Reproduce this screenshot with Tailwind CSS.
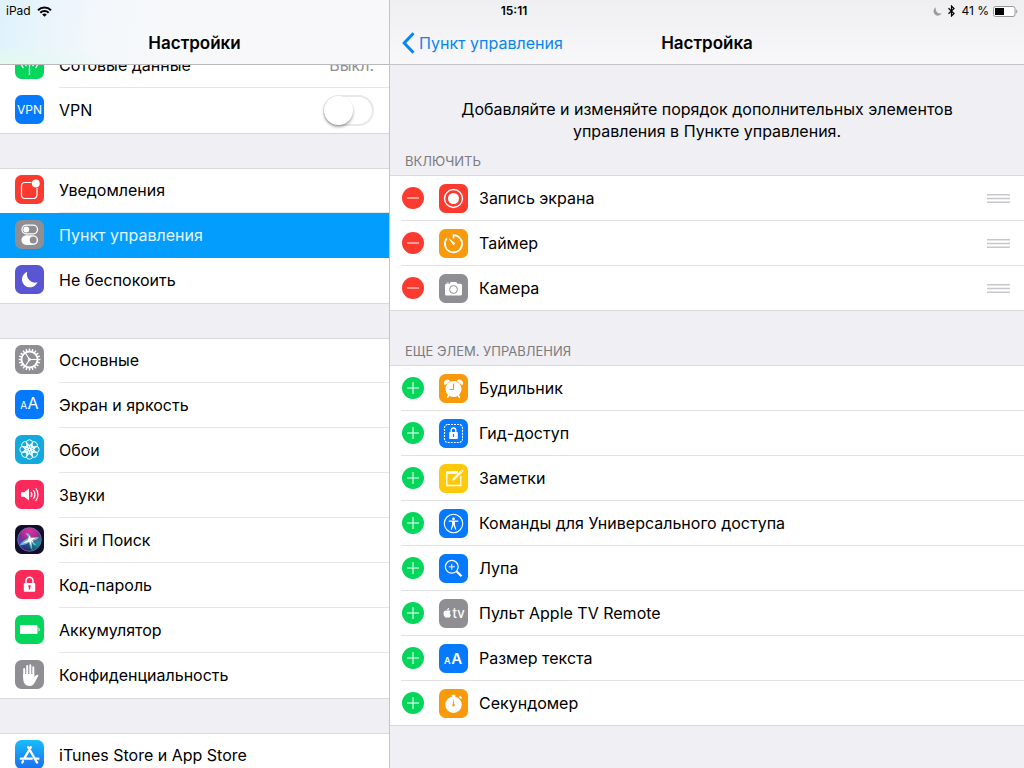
<!DOCTYPE html>
<html lang="ru">
<head>
<meta charset="utf-8">
<meta name="viewport" content="width=device-width, initial-scale=1">
<title>Настройки</title>
<script src="https://cdn.jsdelivr.net/npm/@tailwindcss/browser@4"></script>
</head>
<body class="relative flex h-screen overflow-hidden bg-[#efeff4] font-['Inter','Liberation_Sans',sans-serif] text-base text-black">

<!-- Status bar over both columns -->
<div class="absolute inset-x-0 top-0 z-10 grid h-[22px] grid-cols-3 items-center px-1.5 text-xs">
  <div class="flex items-center gap-1.5">
    <span>iPad</span>
    <svg class="h-[11px] w-[15px]" viewBox="0 0 15 11" fill="none" stroke="#000" stroke-width="2"><path d="M1 4.2a9.2 9.2 0 0 1 13 0M3.3 6.7a6 6 0 0 1 8.4 0"/><path d="M7.5 10.8L5.2 8.5a3.3 3.3 0 0 1 4.6 0z" fill="#000" stroke="none"/></svg>
  </div>
  <div class="pl-1 text-center font-semibold">15:11</div>
  <div class="flex items-center justify-end">
    <svg class="mr-1.5 size-[9px]" viewBox="0 0 9 9" fill="#9b9b9e"><path d="M3 .3A4.400 4.400 0 1 0 8.800 6.300A4.600 4.600 0 0 1 3 .3z"/></svg>
    <svg class="mr-1.5 h-3 w-[7px]" viewBox="0 0 7 12" fill="none" stroke="#000" stroke-width="1.2"><path d="M.5 3.200L6 8.500L3.500 11V1L6 3.500L.5 8.800"/></svg>
    <span class="mr-1">41 %</span>
    <svg class="h-[11px] w-[25px]" viewBox="0 0 25 11"><rect x=".5" y=".5" width="21.500" height="10" rx="2" fill="#fff" stroke="#98989b"/><rect x="2" y="2" width="9" height="7" fill="#000"/><path d="M23.200 3.500c1.600.6 1.600 3.400 0 4z" fill="#98989b"/></svg>
  </div>
</div>

<aside class="flex w-[390px] shrink-0 flex-col border-r border-[#c4c4c8]">
  <header class="flex h-[65px] shrink-0 flex-col justify-end border-b border-[#b9b9bd] bg-[#f8f8fa] bg-[radial-gradient(ellipse_at_0%_100%,#e4faee_0%,#e4faee00_22%),linear-gradient(100deg,#def2fb_0%,#e9f5fb_12%,#f5f8fb_28%,#f8f8fa_60%)]">
    <h1 class="h-11 pt-px text-center text-[17px] leading-[44px] font-semibold">Настройки</h1>
  </header>
  <nav class="min-h-0 flex-1 overflow-hidden"><div id="menu" class="-mt-[22px] flex flex-col gap-[35px]"></div></nav>
</aside>

<main class="flex min-w-0 flex-1 flex-col">
  <header class="h-[65px] shrink-0 border-b border-[#c4c4c8] bg-linear-to-b from-[#efeff1] to-[#f8f8fb] pt-5">
    <div class="grid h-11 grid-cols-[1fr_auto_1fr] items-center px-3">
      <a href="#" class="flex items-center gap-1 whitespace-nowrap text-[#0a85ee]">
        <svg class="h-[22px] w-[13px]" viewBox="0 0 13 22" fill="none" stroke="#0a85ee" stroke-width="3"><path d="M11.500 1.200L2.200 11l9.300 9.800"/></svg>
        Пункт управления
      </a>
      <h2 class="pt-px text-[17px] leading-[44px] font-semibold">Настройка</h2>
    </div>
  </header>
  <p class="mx-auto mt-[33px] max-w-[520px] text-center leading-[22px]">Добавляйте и изменяйте порядок дополнительных элементов управления в Пункте управления.</p>
  <h3 class="mt-[9px] px-[15px] pb-1 text-[13px] leading-5 text-[#7b7b80]">ВКЛЮЧИТЬ</h3>
  <ul id="included" class="border-y border-[#d9d9dd] bg-white"></ul>
  <h3 class="mt-[30px] px-[15px] pb-1 text-[13px] leading-5 text-[#7b7b80]">ЕЩЕ ЭЛЕМ. УПРАВЛЕНИЯ</h3>
  <ul id="more" class="border-y border-[#d9d9dd] bg-white"></ul>
</main>

<script>
const ring = (n, f) => Array.from({length: n}, (_, i) => f(i * 360 / n)).join('');
const W = 'fill="none" stroke="#fff"';
const icons = {
  cell: ['#04d65c', `<g ${W} stroke-width="1.300"><path d="M14.500 13v12M11.500 16a4 4 0 0 1 0-6M17.500 16a4 4 0 0 0 0-6M8.500 18a7 7 0 0 1 0-10M20.500 18a7 7 0 0 0 0-10"/></g><circle cx="14.500" cy="13" r="1.500" fill="#fff"/>`],
  vpn: ['#057aff', `<text x="14.500" y="19" text-anchor="middle" font-size="12" fill="#fff">VPN</text>`],
  notif: ['#fc3a30', `<path d="M16.500 7.500H10A3.500 3.500 0 0 0 6.500 11v9a3.500 3.500 0 0 0 3.500 3.500h8.500A3.500 3.500 0 0 0 22 20v-7" ${W} stroke-width="1.200"/><circle cx="20.800" cy="8.500" r="3.900" fill="#fff"/>`],
  control: ['#8e8e93', `<rect x="7" y="5.200" width="15.500" height="8.600" rx="4.300" ${W} stroke-width="1.300"/><circle cx="11.300" cy="9.500" r="2.900" fill="#fff"/><rect x="6.400" y="15.200" width="16.700" height="9.800" rx="4.900" fill="#fff"/><circle cx="18.200" cy="20.100" r="3.500" fill="#8e8e93"/>`],
  moon: ['#5a55d2', `<path d="M12.300 6.800A8 8 0 1 0 22.400 17.300A8.300 8.300 0 0 1 12.300 6.800z" fill="#fff"/>`],
  gear: ['#8e8e93', `<g ${W}><circle cx="14.500" cy="14.500" r="8" stroke-width="1.800"/>${ring(20, a => `<path d="M14.500 6.500V3.600" stroke-width="1.500" transform="rotate(${a} 14.500 14.500)"/>`)}<path d="M14.500 14.500H22M14.500 14.500L10.500 8M14.500 14.500L10.500 21" stroke-width="1.200"/><circle cx="14.500" cy="14.500" r="1.200" stroke-width="1"/></g>`],
  display: ['#057aff', `<text x="5.300" y="19" font-size="10" fill="#fff">A</text><text x="12.600" y="19" font-size="16" fill="#fff">A</text>`],
  wall: ['#12a9dc', `<g ${W} stroke-width=".9">${ring(8, a => `<circle cx="14.500" cy="8" r="3.200" transform="rotate(${a} 14.500 14.500)"/><ellipse cx="14.500" cy="11.200" rx="1.500" ry="2.100" transform="rotate(${a + 22.5} 14.500 14.500)"/>`)}<circle cx="14.500" cy="14.500" r="1.500"/></g>`],
  sound: ['#fc2a5a', `<path d="M6 12.200h3.200l4.800-3.700v12l-4.800-3.700H6z" fill="#fff"/><g ${W} stroke-width="1.300"><path d="M16 12a4.500 4.500 0 0 1 0 5M18.300 10.200a7 7 0 0 1 0 8.600M20.700 8.200a10 10 0 0 1 0 12.600"/></g>`],
  siri: ['#11102a', `<defs><radialGradient id="sp" cx=".5" cy=".12" r=".62"><stop stop-color="#d8309f"/><stop offset=".5" stop-color="#b42c95"/><stop offset="1" stop-color="#b42c95" stop-opacity="0"/></radialGradient><radialGradient id="sb" cx=".1" cy=".6" r=".55"><stop stop-color="#4b46c8"/><stop offset="1" stop-color="#4b46c8" stop-opacity="0"/></radialGradient><radialGradient id="st" cx=".85" cy=".65" r=".6"><stop stop-color="#149c9e"/><stop offset="1" stop-color="#149c9e" stop-opacity="0"/></radialGradient></defs><g><circle cx="14.500" cy="14.500" r="11.800" fill="#1f1c4c"/><circle cx="14.500" cy="14.500" r="11.800" fill="url(#sb)"/><circle cx="14.500" cy="14.500" r="11.800" fill="url(#st)"/><circle cx="14.500" cy="14.500" r="11.800" fill="url(#sp)" stroke="#7f7db5" stroke-width=".7"/></g><path d="M13.800 12.500L10.500 8.500C13 7.800 14.800 9 15.800 12.300L24 12C22.800 14.500 20.500 15.500 17.500 15.700L21.500 20.500C19 20.300 17.500 19 16.400 17L17.400 25C15 23 14.500 20 14 17.500C11.500 19.500 8.500 20.300 4.500 20.200C6.500 17 9.500 14.800 13.800 12.500z" fill="#6fdfe6" opacity=".75"/><path d="M14.200 10.500l1.700 2.600 5.100-.2-3.800 2 1.500 2.700-2.600-1.300.5 5.200-2.200-4.700-6.900 1.700 5.600-3.700z" fill="#fff"/>`],
  lock: ['#fc2a5a', `<path d="M11 14v-3.200a3.500 3.500 0 0 1 7 0V14" ${W} stroke-width="1.500"/><rect x="8.800" y="13" width="11.400" height="8.800" rx=".8" fill="#fff"/><path d="M14.500 15a1.400 1.400 0 0 1 .7 2.500v2h-1.400v-2a1.400 1.400 0 0 1 .7-2.500z" fill="#fc2a5a"/>`],
  batt: ['#04d65c', `<rect x="5" y="10" width="17.500" height="9" rx="1" fill="#fff"/><path d="M23.500 12.500c1.500.5 1.500 3.500 0 4z" fill="#fff"/>`],
  hand: ['#8e8e93', `<g ${W} stroke-width="2" stroke-linecap="round"><path d="M9.200 9v8M12.200 6v10M15.300 5.300V16M18.300 7.300V17"/></g><path d="M8.200 14h11.100v3.500c1.300-2 2.300-2.900 3.700-2.600.7.200.4.800 0 1.400l-3 5.700c-1.200 2.600-2.800 4-5.500 4-4.300 0-6.300-3.200-6.300-7.500z" fill="#fff"/>`],
  store: ['url(#sg)', `<defs><linearGradient id="sg" x2="0" y2="1"><stop stop-color="#18bdfb"/><stop offset="1" stop-color="#1b6ff0"/></linearGradient></defs><g ${W} stroke-width="2.300" stroke-linecap="round"><path d="M15.800 7.200L9.300 18.400M13.200 7.200l8.800 15.300M5.800 18.700h11M20.800 18.700h2.600M8 21.300l-.7 1.200"/></g>`],
  record: ['#fc3a30', `<circle cx="14.500" cy="14.500" r="9" ${W} stroke-width="1.400"/><circle cx="14.500" cy="14.500" r="5.500" fill="#fff"/>`],
  timer: ['#f99a0c', `<path d="M14.500 9.500V6.200a8.600 8.600 0 1 1-6.600 3.100" ${W} stroke-width="1.700"/><path d="M9.500 9l6.300 4.900a1.400 1.400 0 0 1-1.900 1.900z" fill="#fff"/>`],
  camera: ['#8e8e93', `<path d="M7.500 9.800h3L11.700 8h5.600l1.200 1.800h3A1.500 1.500 0 0 1 23 11.300v8.700a1.500 1.500 0 0 1-1.500 1.500h-14A1.500 1.500 0 0 1 6 20v-8.700a1.500 1.500 0 0 1 1.500-1.500z" fill="#fff"/><rect x="7.500" y="8.600" width="2.200" height=".9" fill="#fff"/><circle cx="14.500" cy="15.500" r="3.900" fill="none" stroke="#8e8e93"/>`],
  alarm: ['#f99a0c', `<g fill="#fff"><circle cx="14.500" cy="15" r="8"/><path d="M5.800 11.300a3.400 3.400 0 0 1 5.300-4.400zM23.200 11.300a3.400 3.400 0 0 0-5.300-4.400z"/></g><path d="M10 21l-1.500 2.200M19 21l1.500 2.200" ${W} stroke-width="1.600" stroke-linecap="round"/><path d="M14.500 9.500v6h-4" fill="none" stroke="#f99a0c" stroke-width="1.200"/>`],
  guide: ['#057aff', `<rect x="5.500" y="5.500" width="18" height="18" rx="3.500" ${W} stroke-width="1.100" stroke-dasharray="2 1"/><path d="M12.200 13.500v-2.200a2.300 2.300 0 0 1 4.600 0v2.200" ${W} stroke-width="1.300"/><rect x="10.200" y="13" width="8.600" height="7" rx=".7" fill="#fff"/><path d="M14.500 15v3" stroke="#057aff" stroke-width="1.200"/>`],
  notes: ['#fdc90b', `<path d="M19 8H7.800v13.500h14V12" ${W} stroke-width="1.300"/><path d="M7.800 8.700h11" ${W} stroke-width="2.200"/><path d="M13 16.800l1-2.500 7.500-7.500 1.700 1.700-7.500 7.300z" fill="#fff"/><path d="M22 6.300l1-1 1.700 1.700-1 1z" fill="#fff"/>`],
  access: ['#057aff', `<circle cx="14.500" cy="14.500" r="9.200" ${W} stroke-width="1.100"/><circle cx="14.500" cy="9.800" r="1.400" fill="#fff"/><path d="M10.200 12.200h8.600" ${W} stroke-width="1.200" stroke-linecap="round"/><path d="M13 12h3v4l1.300 4.400-1 .3-1.800-4.400-1.800 4.400-1-.3L13 16z" fill="#fff"/>`],
  magnify: ['#057aff', `<circle cx="12.800" cy="12.800" r="6.400" ${W} stroke-width="1.200"/><path d="M12.800 9.800v6M9.800 12.800h6" ${W} stroke-width="1"/><path d="M17.800 17.500l4.700 4.800" ${W} stroke-width="2.200"/>`],
  tv: ['#8e8e93', `<path d="M8.400 11.700c.9-.5 2.400-.6 3.200.5-1.400 1-1.200 3.100.4 3.800-.7 1.700-1.500 2.900-2.600 2.600-.8-.3-1.100-.3-1.900 0C5.700 19.100 3.500 14.500 5 12.500c.9-1.200 2.100-1.200 3.400-.8zM8.100 11.200c0-1.300.8-2.200 2-2.500.1 1.300-.7 2.400-2 2.500z" fill="#fff"/><text x="13.500" y="18.600" font-size="13" font-weight="500" fill="#fff">tv</text>`],
  textsize: ['#057aff', `<text x="5" y="20" font-size="9" font-weight="600" fill="#fff">A</text><text x="12.300" y="20" font-size="15" font-weight="600" fill="#fff">A</text>`],
  stopwatch: ['#f99a0c', `<circle cx="14.500" cy="15.800" r="8.200" fill="#fff"/><path d="M12.700 5.800h3.600v2.800h-3.600z" fill="#fff"/><path d="M20.500 7.500l2 1.800" ${W} stroke-width="1.700"/><path d="M14.500 9.800l.7 5.300a1.300 1.300 0 1 1-1.400 0z" fill="#f99a0c"/>`]
};
const icon = k => `<svg class="size-[29px] shrink-0" viewBox="0 0 29 29" aria-hidden="true"><rect width="29" height="29" rx="6.500" fill="${icons[k][0]}"/>${icons[k][1]}</svg>`;

const toggle = `<input id="vpn" type="checkbox" role="switch" class="relative mr-[15px] h-[31px] w-[51px] appearance-none rounded-full border-2 border-[#e8e8eb] bg-white before:absolute before:-top-px before:-left-px before:size-[29px] before:rounded-full before:bg-white before:shadow-[0_2px_3px_rgba(0,0,0,0.35)]">`;
const menu = [
  [['cell', 'Сотовые данные', 'Выкл.'], ['vpn', 'VPN', toggle]],
  [['notif', 'Уведомления'], ['control', 'Пункт управления'], ['moon', 'Не беспокоить']],
  [['gear', 'Основные'], ['display', 'Экран и яркость'], ['wall', 'Обои'], ['sound', 'Звуки'], ['siri', 'Siri и Поиск'], ['lock', 'Код-пароль'], ['batt', 'Аккумулятор'], ['hand', 'Конфиденциальность']],
  [['store', 'iTunes Store и App Store']]
];
const menuRow = ([k, name, extra = '']) => {
  const on = k === 'control';
  const isSwitch = k === 'vpn';
  const body = `<span class="pb-0.5">${icon(k)}</span><span class="flex h-full flex-1 items-center border-b group-last:border-transparent ${on ? 'border-transparent' : 'border-[#e6e6e9]'}">${isSwitch ? '<label for="vpn" class="flex-1">VPN</label>' + extra : `<span class="flex-1">${name}</span>${extra && `<span class="mr-[15px] text-[#8e8e93]">${extra}</span>`}`}</span>`;
  const cls = 'flex h-[45px] items-center gap-[15px] pl-[15px]';
  return `<li class="group ${on ? 'bg-[#039dfd] text-[#e2f6ff]' : ''}">${isSwitch ? `<div class="${cls}">${body}</div>` : `<a href="#" class="${cls}">${body}</a>`}</li>`;
};
document.getElementById('menu').innerHTML = menu.map(g => `<ul class="bg-white shadow-[inset_0_1px_0_#d9d9dd,0_1px_0_#d9d9dd]">${g.map(menuRow).join('')}</ul>`).join('');

const controlRow = (add) => ([k, name]) => `<li class="group flex h-[45px] items-center pl-[11px] last:h-11">
  <div class="flex h-full flex-1 items-center border-b border-[#e0e0e3] pr-3.5 pl-px group-last:border-b-0">
    <button type="button" aria-label="${add ? 'Добавить' : 'Удалить'}: ${name}" class="mr-[15px] flex size-[22px] items-center justify-center rounded-full ${add ? 'bg-[#04d65c]' : 'bg-[#fc3a30]'}"><svg class="size-3" viewBox="0 0 12 12" stroke="#fff" stroke-width="1"><path d="${add ? 'M0 6h12M6 0v12' : 'M0 6h12'}"/></svg></button>
    ${icon(k)}
    <span class="ml-[11px] flex-1">${name}</span>
    ${add ? '' : `<button type="button" aria-label="Переместить: ${name}"><svg class="h-[9px] w-[23px]" viewBox="0 0 23 9" fill="#c7c7cc"><path d="M0 0h23v1.500H0zM0 3.700h23v1.500H0zM0 7.400h23v1.500H0z"/></svg></button>`}
  </div></li>`;
document.getElementById('included').innerHTML = [['record', 'Запись экрана'], ['timer', 'Таймер'], ['camera', 'Камера']].map(controlRow(false)).join('');
document.getElementById('more').innerHTML = [['alarm', 'Будильник'], ['guide', 'Гид-доступ'], ['notes', 'Заметки'], ['access', 'Команды для Универсального доступа'], ['magnify', 'Лупа'], ['tv', 'Пульт Apple TV Remote'], ['textsize', 'Размер текста'], ['stopwatch', 'Секундомер']].map(controlRow(true)).join('');
</script>
</body>
</html>
